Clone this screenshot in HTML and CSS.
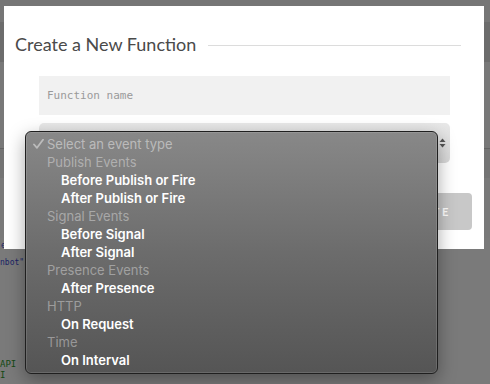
FILE: index.html
```html
<!DOCTYPE html>
<html lang="en">
<head>
  <meta charset="UTF-8" />
  <title>Create a New Function</title>
  <link rel="stylesheet" href="styles.css">
</head>
<body>
  <div class="app">
    <div class="nav"></div>
    <div class="subnav"></div>
    <div class="content"></div>
    <div class="tabs"></div>
    <div class="panel"></div>
    <div class="editor">
      <div class="code-line first blue">e:</div>
      <div class="code-line second blue">nbot"</div>
      <div class="code-spacer"></div>
      <div class="code-line small green">API</div>
      <div class="code-line small green">I</div>
    </div>
  </div>

  <div class="overlay">
    <div class="modal">
      <div class="modal-title">
        <h2>Create a New Function</h2>
        <span class="rule"></span>
      </div>
      <div class="form">
        <input class="field" type="text" placeholder="Function name">
        <div class="select">
          <svg class="arrows" width="7" height="10" viewBox="0 0 7 10">
            <path d="M3.5 0.5 L6.5 4 L0.5 4 Z" fill="#555"/>
            <path d="M3.5 9.5 L6.5 6 L0.5 6 Z" fill="#555"/>
          </svg>
        </div>
      </div>
      <div class="actions">
        <button class="btn-create">CREATE</button>
      </div>
    </div>
  </div>

  <!-- native select popup, open -->
  <ul class="menu">
    <li class="placeholder">
      <svg class="check" width="11" height="10" viewBox="0 0 11 10">
        <path d="M1 5.5 L4 8.8 L10 0.8" fill="none" stroke="currentColor" stroke-width="1.8" stroke-linecap="round" stroke-linejoin="round"/>
      </svg>
      Select an event type
    </li>
    <li class="group">Publish Events</li>
    <li class="option">Before Publish or Fire</li>
    <li class="option">After Publish or Fire</li>
    <li class="group">Signal Events</li>
    <li class="option">Before Signal</li>
    <li class="option">After Signal</li>
    <li class="group">Presence Events</li>
    <li class="option">After Presence</li>
    <li class="group">HTTP</li>
    <li class="option">On Request</li>
    <li class="group">Time</li>
    <li class="option">On Interval</li>
  </ul>
</body>
</html>
```

FILE: styles.css
```css
html, body {
  margin: 0;
  width: 490px;
  height: 384px;
  overflow: hidden;
}
body {
  position: relative;
  background: #fff;
  font-family: "Lato", "Liberation Sans", sans-serif;
}

/* page behind the dialog */
.app {
  display: flex;
  flex-direction: column;
}
.nav { height: 22px; background: #f6f6f6; }
.subnav { height: 40px; background: #e2e2e2; }
.content { height: 86px; background: #fbfbfb; border-bottom: 1px solid #cfcfcf; }
.tabs { height: 29px; background: #f3f3f3; }
.panel { height: 60px; background: #fdfdfd; }
.editor {
  width: 25px;
  overflow: hidden;
  font-family: "DejaVu Sans Mono", monospace;
  font-size: 8px;
}
.code-line {
  display: flex;
  align-items: center;
  white-space: pre;
}
.code-line.first { height: 14px; padding-left: 1px; }
.code-line.second { height: 20px; }
.code-line.small { height: 11px; font-size: 9px; }
.code-spacer { height: 86px; }
.code-line.blue { color: #3c4cd6; }
.code-line.green { color: #2f9a2f; }

/* dim layer + dialog */
.overlay {
  position: absolute;
  inset: 0;
  background: rgba(0, 0, 0, 0.52);
  padding: 6px 0 0 4px;
}
.modal {
  width: 480px;
  height: 243px;
  box-sizing: border-box;
  background: #fff;
  padding: 26px 12px 0 11px;
}
.modal-title {
  display: flex;
  align-items: center;
  gap: 12px;
  margin-right: 11px;
}
.modal-title h2 {
  margin: 0;
  font-weight: 400;
  font-size: 18px;
  line-height: 24px;
  color: #4a4a4a;
  white-space: nowrap;
}
.rule {
  flex: 1;
  height: 1px;
  margin-top: 2px;
  background: #dcdcdc;
}
.form {
  display: flex;
  flex-direction: column;
  gap: 8px;
  margin: 20px 22px 0 24px;
}
.field {
  height: 39px;
  box-sizing: border-box;
  border: none;
  background: #f1f1f1;
  padding: 0 8px;
  font-family: "DejaVu Sans Mono", monospace;
  font-size: 11px;
  color: #444;
  outline: none;
}
.field::placeholder { color: #9a9a9a; }
.select {
  height: 40px;
  border-radius: 5px;
  background: linear-gradient(#e8e8e8, #d8d8d8);
  display: flex;
  align-items: center;
  justify-content: flex-end;
  padding-right: 4px;
}
.actions {
  display: flex;
  justify-content: flex-end;
  margin-top: 30px;
}
.btn-create {
  width: 110px;
  height: 37px;
  border: none;
  border-radius: 4px;
  background: #c8c8c8;
  color: #fff;
  padding: 0 0 0 12px;
  font-family: "Lato", sans-serif;
  font-weight: 700;
  font-size: 11px;
  letter-spacing: 2.5px;
}

/* open dropdown */
.menu {
  position: absolute;
  left: 25px;
  top: 131px;
  width: 413px;
  height: 243px;
  box-sizing: border-box;
  margin: 0;
  padding: 3px 0 0;
  list-style: none;
  border: 1px solid #1f1f1f;
  border-radius: 6px;
  background: linear-gradient(#888 0%, #6c6c6c 50%, #555 100%);
  box-shadow: inset 0 0 0 1px rgba(255, 255, 255, 0.12), 0 6px 18px rgba(0, 0, 0, 0.35);
  font-family: "Inter", sans-serif;
  font-size: 13px;
}
.menu li {
  height: 18px;
  line-height: 18px;
  white-space: nowrap;
}
.placeholder, .group {
  color: rgba(255, 255, 255, 0.38);
  padding-left: 21px;
}
.placeholder {
  position: relative;
  color: rgba(255, 255, 255, 0.45);
}
.check {
  position: absolute;
  left: 7px;
  top: 4px;
}
.option {
  color: #fff;
  font-weight: 600;
  padding-left: 35px;
}
```
